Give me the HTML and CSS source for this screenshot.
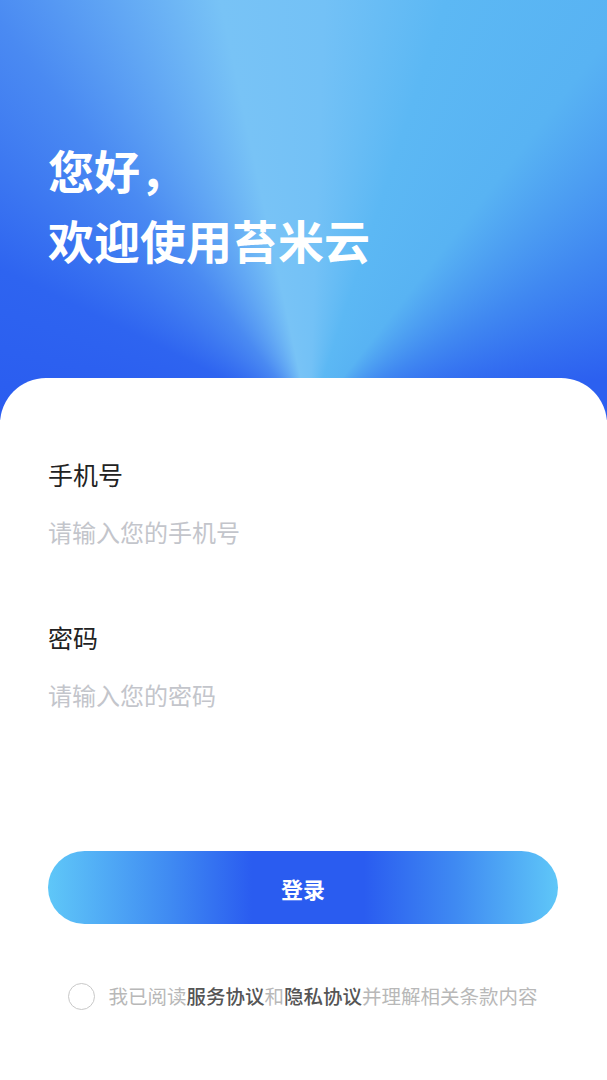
FILE: index.html
```html
<!DOCTYPE html>
<html lang="zh-CN">
<head>
  <meta charset="UTF-8" />
  <meta name="viewport" content="width=device-width, initial-scale=1.0"/>
  <title>登录</title>
  <link rel="stylesheet" href="styles.css">
</head>
<body>
  <div class="hero">
    <h1>您好，<br>欢迎使用苔米云</h1>
  </div>

  <div class="card">
    <div class="field">
      <label for="phone">手机号</label>
      <input type="text" id="phone" placeholder="请输入您的手机号" />
    </div>
    <div class="field">
      <label for="pwd">密码</label>
      <input type="password" id="pwd" placeholder="请输入您的密码" />
    </div>

    <button class="login">登录</button>

    <div class="agree">
      <span class="check"></span>
      <p>我已阅读<b>服务协议</b>和<b>隐私协议</b>并理解相关条款内容</p>
    </div>
  </div>
</body>
</html>
```

FILE: styles.css
```css
* {
  box-sizing: border-box;
}
body {
  margin: 0;
  font-family: "Noto Sans CJK SC", "Noto Sans", sans-serif;
  background: #fff;
  min-height: 100vh;
}
.hero {
  height: 420px;
  padding: 134px 48px 0;
  background:
    conic-gradient(from 270deg at 51% 100%,
      #2a5cf0 0deg,
      #2e64f0 26deg,
      #4a8af2 52deg,
      #78c3f6 78deg,
      #73c1f6 92deg,
      #5cb8f4 108deg,
      #58b3f3 128deg,
      #4088f1 150deg,
      #2c60f0 172deg,
      #2a5cf0 360deg);
}
.hero h1 {
  margin: 0;
  color: #fff;
  font-size: 46px;
  line-height: 70px;
  font-weight: 700;
}
.card {
  margin-top: -42px;
  background: #fff;
  border-radius: 46px 46px 0 0;
  padding: 78px 49px 40px 48px;
}
.field {
  display: flex;
  flex-direction: column;
  gap: 21px;
  margin-bottom: 70px;
}
.field:last-of-type {
  margin-bottom: 0;
}
.field label {
  font-size: 25px;
  line-height: 36px;
  color: #222;
}
.field input {
  border: none;
  outline: none;
  padding: 0;
  height: 36px;
  font-family: inherit;
  font-size: 24px;
  color: #333;
}
.field input::placeholder {
  color: #c3c5cb;
}
.login {
  display: block;
  width: 100%;
  height: 73px;
  margin-top: 139px;
  border: none;
  border-radius: 37px;
  background: linear-gradient(to right, #5fc7f8 0%, #3f8af2 24%, #2a5cf0 40%, #2a5cf0 62%, #3f8af2 80%, #5fc7f8 100%);
  color: #fff;
  font-family: inherit;
  font-size: 22px;
  font-weight: 700;
  cursor: pointer;
}
.agree {
  display: flex;
  justify-content: center;
  align-items: center;
  gap: 13px;
  margin-top: 57px;
}
.check {
  flex-shrink: 0;
  width: 27px;
  height: 27px;
  border: 1.5px solid #c8c8c8;
  border-radius: 50%;
}
.agree p {
  margin: 0;
  font-size: 19.5px;
  line-height: 30px;
  color: #b8b8b8;
  white-space: nowrap;
}
.agree b {
  font-weight: 500;
  color: #555;
}
```
